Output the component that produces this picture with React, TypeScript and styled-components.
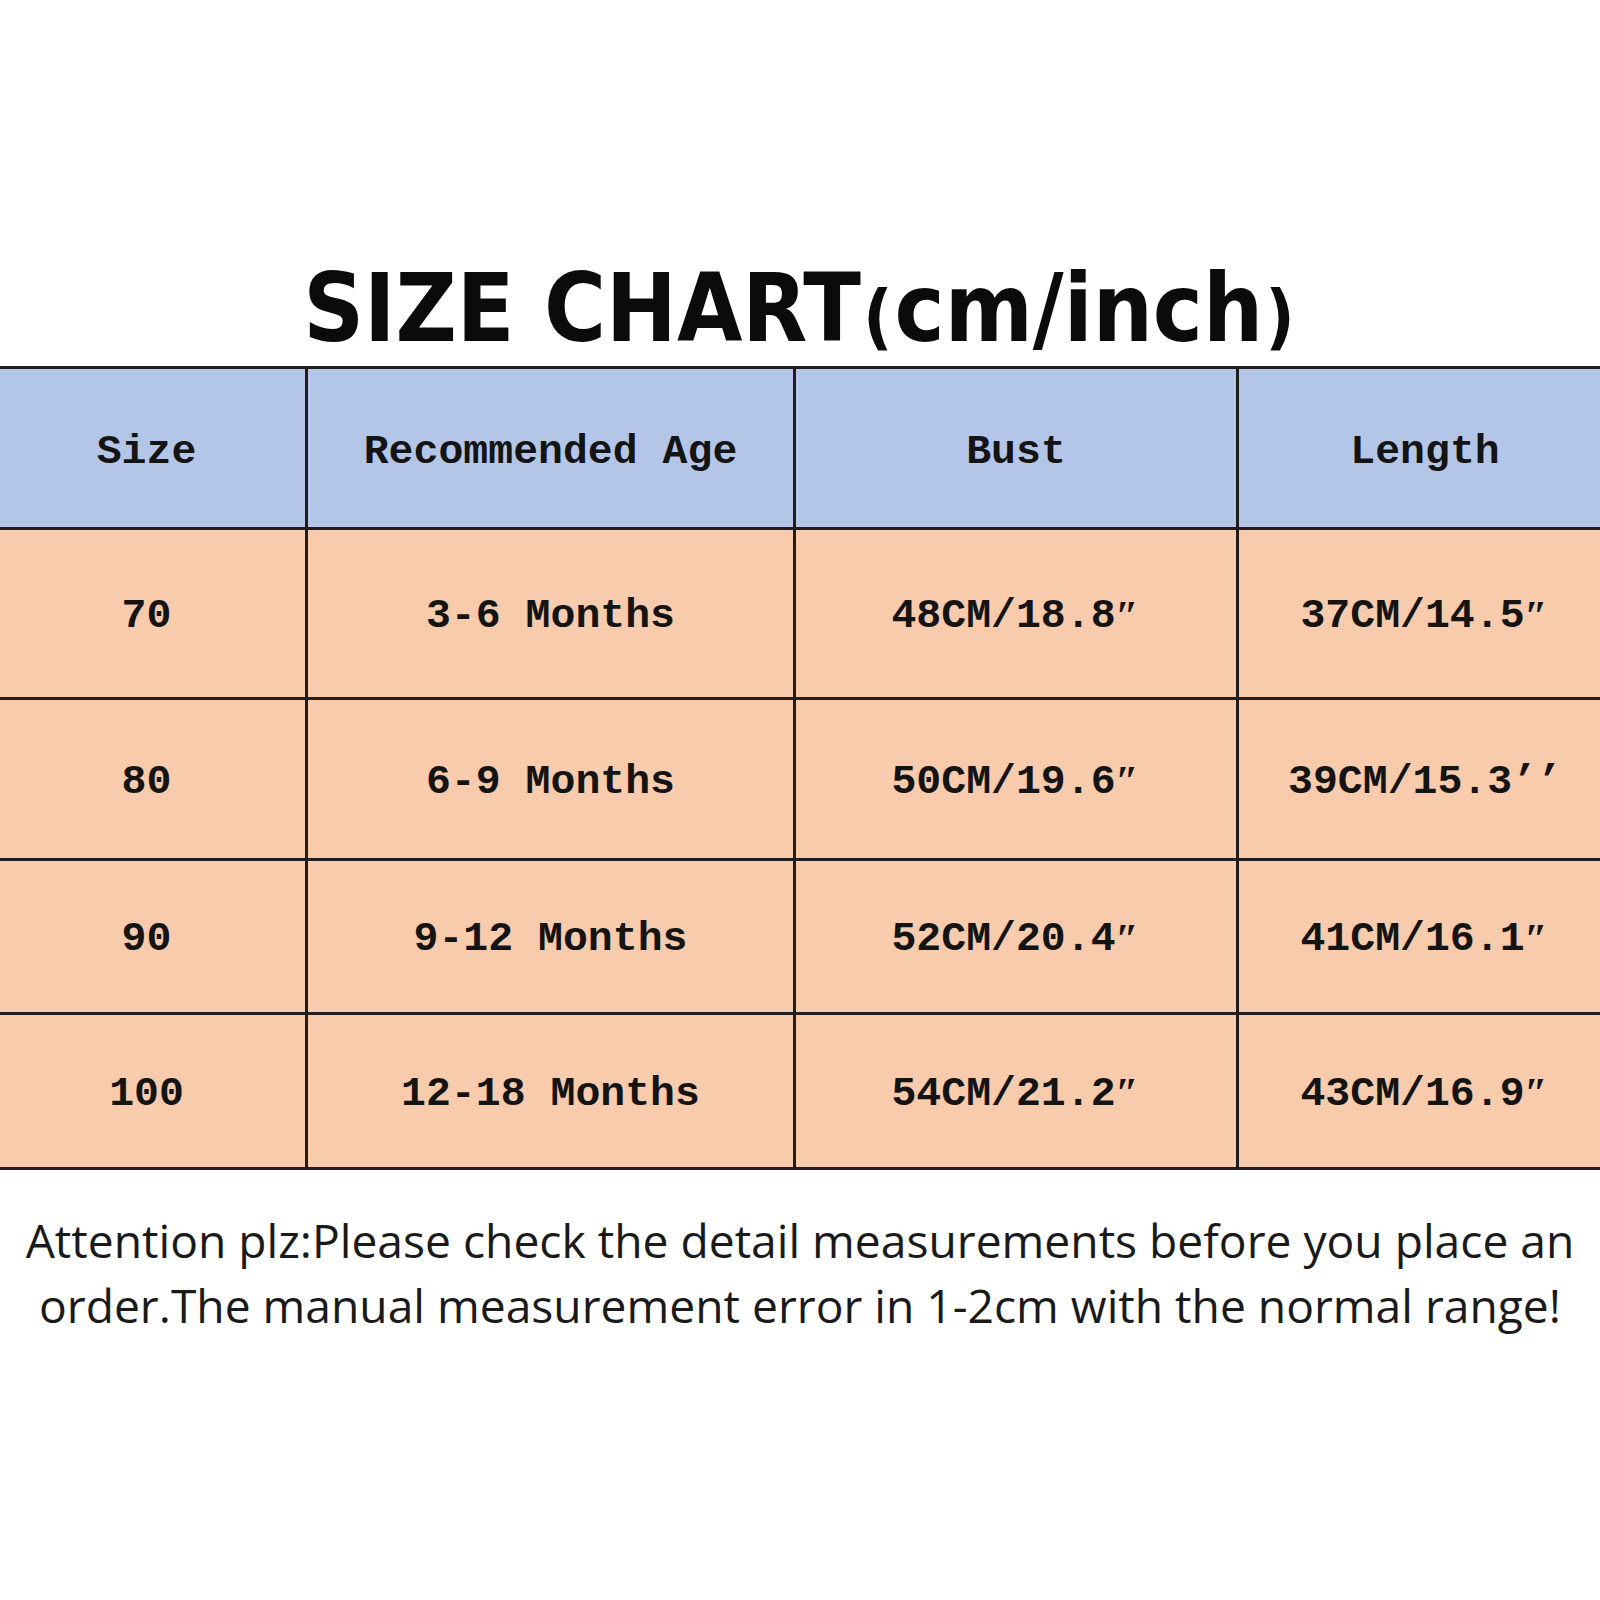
import React from 'react'
import styled, { createGlobalStyle } from 'styled-components'

const GlobalStyle = createGlobalStyle`
  html, body {
    margin: 0;
    padding: 0;
    background: #ffffff;
  }
  body {
    width: 1600px;
    height: 1600px;
    overflow: hidden;
  }
`

const Page = styled.div`
  width: 1600px;
  height: 1600px;
  display: flex;
  flex-direction: column;
  padding-top: 259px;
  box-sizing: border-box;
  background: #ffffff;
`

const Title = styled.h1`
  margin: 0;
  height: 100px;
  line-height: 100px;
  text-align: center;
  font-family: "DejaVu Sans Condensed", "DejaVu Sans", sans-serif;
  font-stretch: condensed;
  font-weight: 700;
  font-size: 94px;
  color: #0b0b0b;
  white-space: nowrap;
`

const Bracket = styled.span`
  font-size: 72px;
  line-height: 1;
  font-weight: 700;
  margin: 0 2px;
`

const TableClip = styled.div`
  margin-top: 7px;
  width: 1600px;
  overflow: hidden;
`

const Table = styled.div`
  margin-left: -12px;
  width: 1623px;
  display: grid;
  grid-template-columns: 320px 488px 443px 372px;
  border-top: 3px solid #221c1c;
`

const Cell = styled.div<{ $head?: boolean; $h: number; $last?: boolean }>`
  height: ${p => p.$h}px;
  box-sizing: border-box;
  display: flex;
  align-items: center;
  justify-content: center;
  background: ${p => (p.$head ? '#b4c6e7' : '#f8cbad')};
  border-bottom: 3px solid #221c1c;
  border-right: ${p => (p.$last ? 'none' : '3px solid #221c1c')};
  font-family: "Liberation Mono", "Courier New", monospace;
  font-weight: 700;
  font-size: 41.5px;
  color: #141414;
  white-space: nowrap;
  padding-top: ${p => (p.$head ? 6 : 4)}px;
`

const Inch = styled.span`
  font-family: "Liberation Serif", "Times New Roman", serif;
  font-weight: 700;
  display: inline-block;
  width: 25px;
  text-align: left;
`

const Note = styled.p`
  margin: 38px 0 0;
  text-align: center;
  font-family: "Open Sans", "Noto Sans", sans-serif;
  font-size: 46.2px;
  line-height: 65px;
  color: #1a1a1a;
  white-space: nowrap;
`

const header = ['Size', 'Recommended Age', 'Bust', 'Length']

const rows = [
  ['70', '3-6 Months', '48CM/18.8″', '37CM/14.5″'],
  ['80', '6-9 Months', '50CM/19.6″', '39CM/15.3’’'],
  ['90', '9-12 Months', '52CM/20.4″', '41CM/16.1″'],
  ['100', '12-18 Months', '54CM/21.2″', '43CM/16.9″'],
]

const rowHeights = [170, 161, 154, 155]

// the inch mark is drawn in a serif face so it slants like the original
const renderValue = (v: string) =>
  v.endsWith('″') ? (
    <>
      {v.slice(0, -1)}
      <Inch>″</Inch>
    </>
  ) : (
    v
  )

const App = () => {
  return (
    <>
      <GlobalStyle />
      <Page>
        <Title>
          SIZE CHART<Bracket>(</Bracket>cm/inch<Bracket>)</Bracket>
        </Title>
        <TableClip>
          <Table>
            {header.map((h, i) => (
              <Cell key={h} $head $h={161} $last={i === 3}>
                {h}
              </Cell>
            ))}
            {rows.map((r, ri) =>
              r.map((c, ci) => (
                <Cell key={ri + '-' + ci} $h={rowHeights[ri]} $last={ci === 3}>
                  {renderValue(c)}
                </Cell>
              ))
            )}
          </Table>
        </TableClip>
        <Note>
          Attention plz:Please check the detail measurements before you place an
          <br />
          order.The manual measurement error in 1-2cm with the normal range!
        </Note>
      </Page>
    </>
  )
}

export default App
